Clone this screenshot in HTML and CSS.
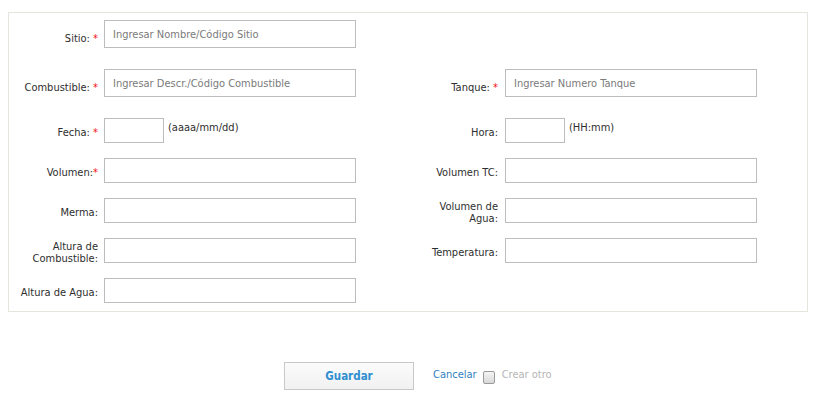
FILE: index.html
```html
<!DOCTYPE html>
<html lang="es">
<head>
<meta charset="utf-8">
<title>Formulario</title>
<link rel="stylesheet" href="styles.css">
</head>
<body>
<div class="panel">
  <div class="row tall">
    <div class="half">
      <label class="lbl">Sitio:&nbsp;<span class="req">*</span></label>
      <input class="inp" type="text" placeholder="Ingresar Nombre/Código Sitio">
    </div>
  </div>
  <div class="row tall">
    <div class="half">
      <label class="lbl">Combustible:&nbsp;<span class="req">*</span></label>
      <input class="inp" type="text" placeholder="Ingresar Descr./Código Combustible">
    </div>
    <div class="half right">
      <label class="lbl">Tanque:&nbsp;<span class="req">*</span></label>
      <input class="inp" type="text" placeholder="Ingresar Numero Tanque">
    </div>
  </div>
  <div class="row">
    <div class="half">
      <label class="lbl">Fecha:&nbsp;<span class="req">*</span></label>
      <input class="inp short" type="text"><span class="hint">(aaaa/mm/dd)</span>
    </div>
    <div class="half right">
      <label class="lbl">Hora:</label>
      <input class="inp short" type="text"><span class="hint">(HH:mm)</span>
    </div>
  </div>
  <div class="row">
    <div class="half">
      <label class="lbl">Volumen:<span class="req">*</span></label>
      <input class="inp" type="text">
    </div>
    <div class="half right">
      <label class="lbl">Volumen TC:</label>
      <input class="inp" type="text">
    </div>
  </div>
  <div class="row">
    <div class="half">
      <label class="lbl">Merma:</label>
      <input class="inp" type="text">
    </div>
    <div class="half right">
      <label class="lbl">Volumen de<br>Agua:</label>
      <input class="inp" type="text">
    </div>
  </div>
  <div class="row">
    <div class="half">
      <label class="lbl">Altura de<br>Combustible:</label>
      <input class="inp" type="text">
    </div>
    <div class="half right">
      <label class="lbl">Temperatura:</label>
      <input class="inp" type="text">
    </div>
  </div>
  <div class="row">
    <div class="half">
      <label class="lbl">Altura de Agua:</label>
      <input class="inp" type="text">
    </div>
  </div>
</div>
<div class="actions">
  <button class="btn" type="button">Guardar</button>
  <a class="cancel" href="#">Cancelar</a>
  <span class="chk"></span>
  <span class="otro">Crear otro</span>
</div>
</body>
</html>
```
FILE: styles.css
```css
html, body {
  margin: 0;
  padding: 0;
  background: #ffffff;
}
body {
  padding: 12px 12px 0 8px;
  font-family: "DejaVu Sans", Verdana, sans-serif;
  font-stretch: condensed;
  font-size: 11px;
  color: #2e2e2e;
}
.panel {
  width: 798px;
  border: 1px solid #e6e5dd;
  padding: 7px 0 8px 0;
}
.row {
  display: flex;
  height: 25px;
  margin-bottom: 15px;
}
.row:last-child {
  margin-bottom: 0;
}
.row.tall {
  height: 28px;
  margin-bottom: 21px;
}
.half {
  display: flex;
  align-items: stretch;
  width: 400px;
  flex: 0 0 400px;
}
.lbl {
  display: flex;
  align-items: center;
  justify-content: flex-end;
  text-align: right;
  width: 95px;
  flex: 0 0 auto;
  padding: 4px 6px 0 0;
  line-height: 12px;
  white-space: nowrap;
  box-sizing: border-box;
}
.right .lbl {
  width: 96px;
  padding-right: 7px;
}
.tall .lbl {
  padding-top: 9px;
}
.req {
  color: #ee1111;
}
.inp {
  box-sizing: border-box;
  width: 252px;
  flex: 0 0 auto;
  height: 100%;
  margin: 0;
  border: 1px solid #bdbdbd;
  border-radius: 0;
  padding: 0 8px;
  font-family: inherit;
  font-stretch: condensed;
  font-size: 11px;
  color: #333;
  background: #fff;
  outline: none;
}
.inp::placeholder {
  color: #7a7a7a;
  opacity: 1;
}
.inp.short {
  width: 60px;
}
.hint {
  margin-left: 4px;
  padding-top: 4px;
  line-height: 12px;
}
.actions {
  display: flex;
  align-items: center;
  margin: 50px 0 0 276px;
  height: 28px;
}
.btn {
  box-sizing: border-box;
  width: 130px;
  height: 28px;
  border: 1px solid #c8c8c8;
  background: linear-gradient(#fbfbfb, #f1f1f1);
  color: #2f8fd0;
  font-family: inherit;
  font-stretch: condensed;
  font-weight: bold;
  font-size: 11.5px;
  padding: 0;
  margin-right: 19px;
}
.cancel {
  color: #2f7fc0;
  text-decoration: none;
  margin-top: -3px;
}
.chk {
  box-sizing: border-box;
  width: 12px;
  height: 13px;
  border: 1px solid #9a9a9a;
  border-radius: 2px;
  background: linear-gradient(#f4f4f4, #d8d8d8);
  margin: 3px 0 0 6px;
}
.otro {
  color: #b5b5b5;
  margin-left: 7px;
  margin-top: -3px;
}
```
